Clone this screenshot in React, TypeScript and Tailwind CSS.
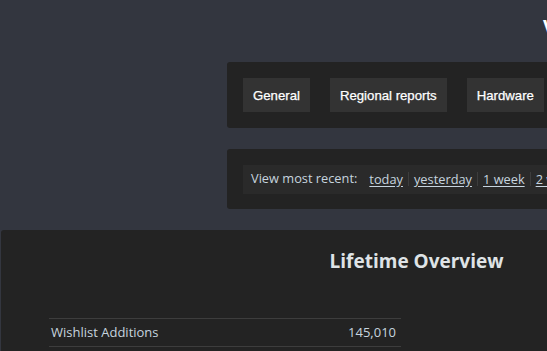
import React from "react";

const links = ["today", "yesterday", "1 week", "2 weeks", "1 month", "3 months"];

export default function App() {
  return (
    <div className="w-[547px] h-[351px] overflow-hidden bg-[#33363f]">
      <div className="w-[900px]">
        <div className="h-[62px] pl-[543px] pt-[14px]">
          <h1 className="text-[20px] leading-[26px] font-bold text-white whitespace-nowrap" style={{ fontFamily: '"Open Sans", sans-serif' }}>
            Viewing Steam Stats
          </h1>
        </div>
        <div className="ml-[227px] w-[640px] bg-[#232323] rounded-[3px] p-4 flex gap-5" style={{ fontFamily: '"Liberation Sans", Arial, sans-serif' }}>
          {["General", "Regional reports", "Hardware", "Reviews"].map((t) => (
            <div key={t} className="h-[34px] pt-[1px] px-[10px] bg-[#333333] text-white text-[13.2px] [-webkit-text-stroke:0.25px_white] flex items-center whitespace-nowrap">
              {t}
            </div>
          ))}
        </div>
        <div className="ml-[227px] mt-[21px] w-[640px] bg-[#232323] rounded-[3px] px-4 pt-4 pb-[15px]" style={{ fontFamily: '"Open Sans", sans-serif' }}>
          <div className="h-[29px] pb-[2px] bg-[#2a2a2a] px-2 flex items-center text-[12.8px] text-[#c6d4df] whitespace-nowrap">
            <span className="mr-[7px]">View most recent:</span>
            {links.map((l, i) => (
              <span key={l} className={"px-[5px] leading-[14px] " + (i > 0 ? "border-l border-[#3d3d3d]" : "")}>
                <span className="underline underline-offset-2">{l}</span>
              </span>
            ))}
          </div>
        </div>
        <div className="ml-[1px] mt-[21px] w-[831px] h-[200px] bg-[#232323] rounded-[3px] pt-[16px]" style={{ fontFamily: '"Open Sans", sans-serif' }}>
          <h2 className="text-center text-[19px] leading-[30px] font-bold text-[#dfe3e6]">Lifetime Overview</h2>
          <div className="ml-[48px] mt-[42px] w-[352px] border-t border-[#3d3d3d]">
            <div className="h-[28px] border-b border-[#3d3d3d] flex items-center justify-between pl-[2px] pr-[5px] text-[13px] text-[#c6d4df]">
              <span>Wishlist Additions</span>
              <span>145,010</span>
            </div>
          </div>
        </div>
      </div>
    </div>
  );
}
